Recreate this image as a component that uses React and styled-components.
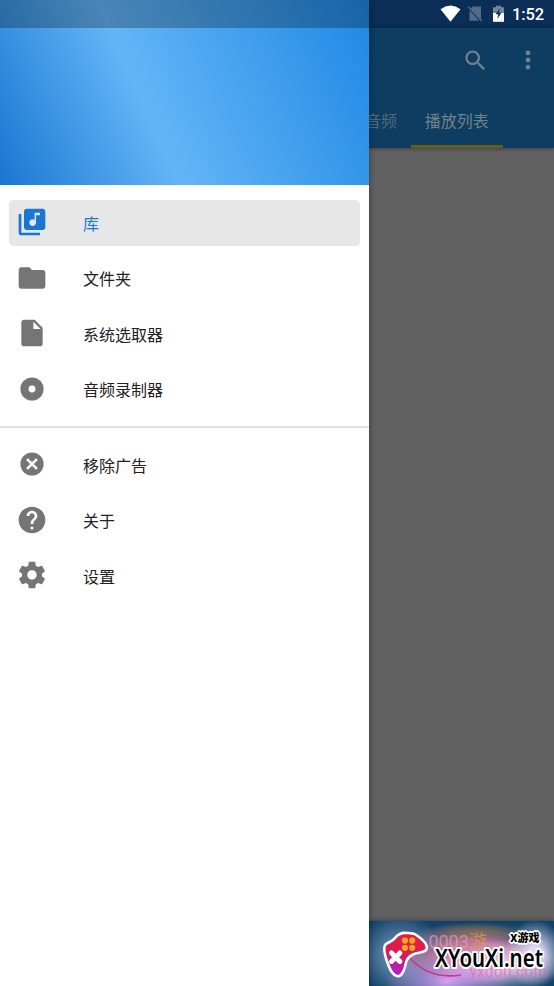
import React from "react";
import styled, { createGlobalStyle } from "styled-components";

const Icon = ({ size = 32, children }) => (
  <svg width={size} height={size} viewBox="0 0 24 24" fill="currentColor">
    {children}
  </svg>
);

const mainItems = [
  {
    label: "库",
    active: true,
    icon: (
      <path d="M20 2H8c-1.1 0-2 .9-2 2v12c0 1.1.9 2 2 2h12c1.1 0 2-.9 2-2V4c0-1.1-.9-2-2-2zm-2 5h-3v5.5c0 1.38-1.12 2.5-2.5 2.5S10 13.88 10 12.5s1.12-2.5 2.5-2.5c.57 0 1.08.19 1.5.51V5h4v2zM4 6H2v14c0 1.1.9 2 2 2h14v-2H4V6z" />
    ),
  },
  {
    label: "文件夹",
    icon: (
      <path d="M10 4H4c-1.1 0-1.99.9-1.99 2L2 18c0 1.1.9 2 2 2h16c1.1 0 2-.9 2-2V8c0-1.1-.9-2-2-2h-8l-2-2z" />
    ),
  },
  {
    label: "系统选取器",
    icon: (
      <path d="M6 2c-1.1 0-1.99.9-1.99 2L4 20c0 1.1.89 2 1.99 2H18c1.1 0 2-.9 2-2V8l-6-6H6zm7 7V3.5L18.5 9H13z" />
    ),
  },
  {
    label: "音频录制器",
    icon: (
      <path
        fillRule="evenodd"
        d="M12 3.3a8.7 8.7 0 1 0 0 17.4a8.7 8.7 0 1 0 0-17.4zM12 9.4a2.6 2.6 0 1 1 0 5.2a2.6 2.6 0 1 1 0-5.2z"
      />
    ),
  },
];

const moreItems = [
  {
    label: "移除广告",
    icon: (
      <>
        <circle cx="12" cy="12" r="8.7" />
        <path d="M8.3 8.3l7.4 7.4M15.7 8.3l-7.4 7.4" stroke="#fff" strokeWidth="1.9" />
      </>
    ),
  },
  {
    label: "关于",
    icon: (
      <path d="M12 2C6.48 2 2 6.48 2 12s4.48 10 10 10 10-4.48 10-10S17.52 2 12 2zm1 17h-2v-2h2v2zm2.07-7.75l-.9.92C13.45 12.9 13 13.5 13 15h-2v-.5c0-1.1.45-2.1 1.17-2.83l1.24-1.26c.37-.36.59-.86.59-1.41 0-1.1-.9-2-2-2s-2 .9-2 2H8c0-2.21 1.79-4 4-4s4 1.79 4 4c0 .88-.36 1.68-.93 2.25z" />
    ),
  },
  {
    label: "设置",
    icon: (
      <path d="M19.43 12.98c.04-.32.07-.64.07-.98s-.03-.66-.07-.98l2.11-1.65c.19-.15.24-.42.12-.64l-2-3.46c-.12-.22-.39-.3-.61-.22l-2.49 1c-.52-.4-1.08-.73-1.69-.98l-.38-2.65C14.46 2.18 14.25 2 14 2h-4c-.25 0-.46.18-.49.42l-.38 2.65c-.61.25-1.17.59-1.69.98l-2.49-1c-.23-.09-.49 0-.61.22l-2 3.46c-.13.22-.07.49.12.64l2.11 1.65c-.04.32-.07.65-.07.98s.03.66.07.98l-2.11 1.65c-.19.15-.24.42-.12.64l2 3.46c.12.22.39.3.61.22l2.49-1c.52.4 1.08.73 1.69.98l.38 2.65c.03.24.24.42.49.42h4c.25 0 .46-.18.49-.42l.38-2.65c.61-.25 1.17-.59 1.69-.98l2.49 1c.23.09.49 0 .61-.22l2-3.46c.12-.22.07-.49-.12-.64l-2.11-1.65zM12 15.5c-1.93 0-3.5-1.57-3.5-3.5s1.57-3.5 3.5-3.5 3.5 1.57 3.5 3.5-1.57 3.5-3.5 3.5z" />
    ),
  },
];

const Menu = ({ items }) => (
  <List>
    {items.map((item) => (
      <Item key={item.label} $active={item.active}>
        <Icon>{item.icon}</Icon>
        <Label>{item.label}</Label>
      </Item>
    ))}
  </List>
);

const StatusIcons = () => (
  <svg width="68" height="20" viewBox="0 0 68 20">
    {/* wifi */}
    <path d="M1.5 5.2Q11.5 -2 21.5 5.2L11.5 17.8z" fill="#fff" />
    {/* no sim */}
    <path d="M33.5 2.5h8.5v13.2L31.7 4.8zM30.5 6.3l9.8 10.5h-9.8z" fill="#536a8a" />
    <path d="M29 2.5l14 14.8" stroke="#536a8a" strokeWidth="1.3" />
    {/* battery */}
    <path d="M54 3.3h3V1.7h5v1.6h3v6H54z" fill="#7186a0" />
    <path d="M54 9h11v8.8H54z" fill="#fff" />
    <path d="M60.8 4.3l-4.2 6h2.6l-.9 4.6 4.2-6.2h-2.6z" fill="#0b2d54" />
  </svg>
);

const Gamepad = () => (
  <svg width="50" height="52" viewBox="0 0 50 52">
    <defs>
      <linearGradient id="pad" x1="0.6" y1="0" x2="0.35" y2="1">
        <stop offset="0" stopColor="#e61f3c" />
        <stop offset="0.5" stopColor="#d51e55" />
        <stop offset="1" stopColor="#a51fe0" />
      </linearGradient>
    </defs>
    <path
      d="M14 8C17 4 21 2.5 26 3C30 3.2 33 3 36 5.5C41 9 46 14 46 18C45 23 38 22 33 24C26 27 25 31 24 37C22 44 19 47 16 46C12 45 9 40 7 34C4 26 1.5 18 4.5 14.5C7 12 11 12 14 8z"
      fill="url(#pad)"
      stroke="#fff"
      strokeWidth="2.6"
    />
    <g fill="#ffa51f">
      <circle cx="24" cy="10.6" r="3.1" />
      <circle cx="31.2" cy="10.6" r="3.1" />
      <circle cx="24" cy="17.8" r="3.1" />
      <circle cx="31.2" cy="17.8" r="3.1" />
    </g>
    <path d="M10.5 23l8.4 8.4M18.9 23l-8.4 8.4" stroke="#fff" strokeWidth="5" strokeLinecap="round" />
  </svg>
);

function App() {
  return (
    <Screen>
      <GlobalStyle />
      <Drawer>
        <Header>
          <StatusShade />
        </Header>
        <Menu items={mainItems} />
        <Divider />
        <Menu items={moreItems} />
      </Drawer>

      <Page>
        <StatusBar>
          <StatusIcons />
          <Clock>1:52</Clock>
        </StatusBar>
        <AppBar>
          <Actions>
            <Icon size={27}>
              <path d="M15.5 14h-.79l-.28-.27C15.41 12.59 16 11.11 16 9.5 16 5.91 13.09 3 9.5 3S3 5.91 3 9.5 5.91 16 9.5 16c1.61 0 3.09-.59 4.23-1.57l.27.28v.79l5 4.99L20.49 19l-4.99-5zm-6 0C7.01 14 5 11.99 5 9.5S7.01 5 9.5 5 14 7.01 14 9.5 11.99 14 9.5 14z" />
            </Icon>
            <Icon size={28}>
              <circle cx="12" cy="5.9" r="2.1" />
              <circle cx="12" cy="12" r="2.1" />
              <circle cx="12" cy="18.1" r="2.1" />
            </Icon>
          </Actions>
          <Tabs>
            <Tab $width={42}>音频</Tab>
            <Tab $width={92} $selected>播放列表</Tab>
          </Tabs>
        </AppBar>
        <Content />
        <Banner>
          <Glow />
          <Faded $left={59} $top={11} $size={18} $color="#d9a3a7">
            0003<em>游</em>
          </Faded>
          <Faded $left={100} $top={41} $size={16} $color="#d873b4">
            yxdon.com
          </Faded>
          <Cable viewBox="0 0 184 65">
            <path d="M41 37C55 53 72 57 92 54" stroke="#d1367d" strokeWidth="1.6" fill="none" />
          </Cable>
          <Brand>
            <Gamepad />
            <BrandText>
              <Small>X游戏</Small>
              <Name>
                <svg width="116" height="30" viewBox="0 0 116 30">
                  <text x="4" y="20.5" textLength="108" lengthAdjust="spacingAndGlyphs">
                    XYouXi.net
                  </text>
                </svg>
              </Name>
            </BrandText>
          </Brand>
        </Banner>
      </Page>
    </Screen>
  );
}

const GlobalStyle = createGlobalStyle`
  body {
    margin: 0;
    font-family: Roboto, "Noto Sans CJK SC", sans-serif;
  }
`;

const Screen = styled.div`
  display: flex;
  width: 554px;
  height: 986px;
  overflow: hidden;
`;

const Drawer = styled.aside`
  position: relative;
  z-index: 1;
  flex: none;
  width: 369.4px;
  background: #fff;
  box-shadow: 0 0 6px rgba(0, 0, 0, 0.45);
`;

const Header = styled.div`
  height: 185px;
  margin-bottom: 14.6px;
  background: linear-gradient(65.6deg, #1976d2 0%, #64b5f6 40%, #1e88e5 100%);
`;

const StatusShade = styled.div`
  height: 27.5px;
  background: rgba(0, 0, 0, 0.26);
`;

const List = styled.nav`
  display: flex;
  flex-direction: column;
  gap: 9.5px;
  padding: 0 9px;
`;

const Item = styled.div`
  display: flex;
  align-items: center;
  gap: 34.6px;
  height: 46px;
  padding-left: 7.4px;
  border-radius: 4.5px;
  background: ${(props) => (props.$active ? "#e7e7e7" : "transparent")};
  color: ${(props) => (props.$active ? "#1976d2" : "#757575")};

  svg {
    flex: none;
    margin-bottom: 0.8px;
  }

  span {
    color: ${(props) => (props.$active ? "#1976d2" : "#212121")};
  }
`;

const Label = styled.span`
  font-size: 16px;
  line-height: 24px;
  padding-top: 4.4px;
`;

const Divider = styled.div`
  height: 1.5px;
  margin: 14px 0 14px;
  background: #e2e2e2;
`;

const Page = styled.main`
  display: flex;
  flex-direction: column;
  flex: 1;
  min-width: 0;
  background: #616161;
`;

const StatusBar = styled.div`
  display: flex;
  align-items: center;
  justify-content: flex-end;
  height: 28px;
  padding-right: 10px;
  background: #0a2e55;
`;

const Clock = styled.span`
  margin-left: 5px;
  color: #fff;
  font-size: 16.5px;
  font-weight: 500;
  letter-spacing: -0.1px;
`;

const AppBar = styled.header`
  display: flex;
  flex-direction: column;
  justify-content: space-between;
  height: 120px;
  background: #0d3d61;
  color: #71808a;
  box-shadow: 0 1px 4px rgba(0, 0, 0, 0.35);
`;

const Actions = styled.div`
  display: flex;
  align-items: center;
  justify-content: flex-end;
  gap: 26px;
  height: 64px;
  padding-right: 12px;

  svg:first-child {
    margin-right: -0.5px;
  }
`;

const Tabs = styled.div`
  display: flex;
  height: 56px;
`;

const Tab = styled.div`
  display: flex;
  flex: none;
  justify-content: ${(props) => (props.$selected ? "center" : "flex-end")};
  box-sizing: border-box;
  width: ${(props) => props.$width}px;
  height: 56px;
  padding: 17.5px ${(props) => (props.$selected ? 1.5 : 14.5)}px 0 0;
  border-bottom: 3px solid ${(props) => (props.$selected ? "#635f18" : "transparent")};
  color: ${(props) => (props.$selected ? "#72818a" : "#50697b")};
  font-size: 16px;
  line-height: 24px;
  white-space: nowrap;
`;

const Content = styled.div`
  flex: 1;
`;

const Banner = styled.footer`
  position: relative;
  height: 65px;
  overflow: hidden;
  background: #10436a;
  box-shadow: 0 -1px 4px rgba(0, 0, 0, 0.3);
`;

const Glow = styled.div`
  position: absolute;
  inset: 0;
  background:
    radial-gradient(ellipse 58px 10px at 108px 11px, rgba(139, 116, 64, 0.65), transparent),
    radial-gradient(ellipse 62px 30px at 78px 60px, rgba(226, 164, 255, 0.95), transparent),
    radial-gradient(ellipse 62px 26px at 130px 45px, rgba(243, 205, 240, 0.9) 20%, transparent),
    radial-gradient(ellipse 30px 34px at 166px 33px, rgba(240, 232, 255, 0.9) 20%, transparent),
    radial-gradient(ellipse 82px 30px at 103px 32px, #bc779b 40%, transparent),
    radial-gradient(ellipse 44px 42px at 31px 34px, rgba(170, 190, 225, 0.75), transparent);
`;

const Faded = styled.span`
  position: absolute;
  left: ${(props) => props.$left}px;
  top: ${(props) => props.$top}px;
  color: ${(props) => props.$color};
  font-size: ${(props) => props.$size}px;
  line-height: 20px;
  opacity: 0.7;
  white-space: nowrap;

  em {
    color: #e69654;
    font-style: normal;
  }
`;

const Cable = styled.svg`
  position: absolute;
  inset: 0;
  width: 184px;
  height: 65px;
`;

const Brand = styled.div`
  position: relative;
  display: flex;
  padding: 9px 0 0 12px;
`;

const BrandText = styled.div`
  display: flex;
  flex-direction: column;
  width: 116px;
`;

const Small = styled.span`
  align-self: flex-end;
  margin-right: 8px;
  height: 16px;
  color: #000;
  font-size: 11px;
  font-weight: 900;
  line-height: 18px;
  text-shadow: 1px 1px 0 #fff, -1px 1px 0 #fff, 1px -1px 0 #fff, -1px -1px 0 #fff, 2px 0 0 #fff,
    -2px 0 0 #fff, 0 2px 0 #fff, 0 -2px 0 #fff;
`;

const Name = styled.div`
  height: 30px;

  text {
    font-family: "Noto Sans", sans-serif;
    font-size: 25px;
    font-weight: 600;
    fill: #000;
    stroke: #fff;
    stroke-width: 4px;
    stroke-linejoin: round;
    paint-order: stroke;
  }
`;

export default App;
